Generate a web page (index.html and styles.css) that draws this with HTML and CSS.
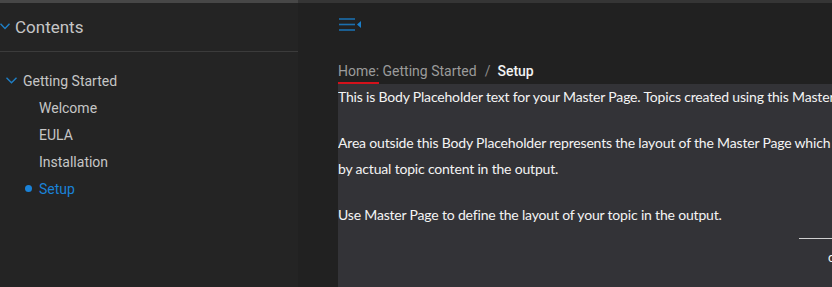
FILE: index.html
```html
<!DOCTYPE html>
<html lang="en">
<head>
    <meta charset="utf-8">
    <title>Setup</title>
    <link rel="stylesheet" href="styles.css">
</head>
<body>
    <aside class="sidebar">
        <div class="toc-head">
            <svg class="chev" width="10" height="7" viewBox="0 0 10 7"><path d="M0.5 0.8 L5 5.5 L9.5 0.8" fill="none" stroke="#1f7fc6" stroke-width="1.4"/></svg>
            <span>Contents</span>
        </div>
        <ul class="toc">
            <li class="book">
                <svg class="chev" width="11" height="7" viewBox="0 0 11 7"><path d="M0.5 0.8 L5.5 5.8 L10.5 0.8" fill="none" stroke="#1f7fc6" stroke-width="1.4"/></svg>
                <span>Getting Started</span>
            </li>
            <li class="topic">Welcome</li>
            <li class="topic">EULA</li>
            <li class="topic">Installation</li>
            <li class="topic current">Setup</li>
        </ul>
    </aside>

    <main class="content">
        <div class="toolbar">
            <svg width="24" height="14" viewBox="0 0 24 14"><g stroke="#1b6fae" stroke-width="1.6"><line x1="1" y1="1" x2="17" y2="1"/><line x1="1" y1="6.5" x2="17" y2="6.5"/><line x1="1" y1="12" x2="17" y2="12"/></g><path d="M23 3 L19 6.5 L23 10 Z" fill="#1b7fca"/></svg>
        </div>
        <div class="crumbs">
            <span class="home">Home:</span><span class="path"> Getting Started</span><span class="sep">/</span><span class="here">Setup</span>
        </div>
        <div class="body">
            <p>This is Body Placeholder text for your Master Page. Topics created using this Master</p>
            <p>Area outside this Body Placeholder represents the layout of the Master Page which<br>by actual topic content in the output.</p>
            <p>Use Master Page to define the layout of your topic in the output.</p>
            <div class="foot">
                <span class="rule"></span>
                <span class="copy">c</span>
            </div>
        </div>
    </main>
</body>
</html>
```

FILE: styles.css
```css
* {
    box-sizing: border-box;
}

body {
    margin: 0;
    height: 287px;
    overflow: hidden;
    display: flex;
    background-color: #212121;
    font-family: Roboto, "Liberation Sans", sans-serif;
}

.sidebar {
    width: 298px;
    flex-shrink: 0;
    background-color: #242424;
    border-top: 3px solid #474747;
    color: #c6c6c6;
}

.toc-head {
    height: 49px;
    display: flex;
    align-items: center;
    gap: 5px;
    font-size: 17px;
    border-bottom: 1px solid #3b3b3b;
    padding-bottom: 1px;
}

.toc {
    list-style: none;
    margin: 0;
    padding: 15px 0 0 0;
    font-size: 14px;
}

.toc li {
    height: 27px;
    display: flex;
    align-items: center;
}

.book {
    padding-left: 6px;
    gap: 6px;
}

.topic {
    padding-left: 39px;
}

.current {
    color: #1a82d8;
    position: relative;
}

.current::before {
    content: "";
    position: absolute;
    left: 25px;
    top: 10px;
    width: 7px;
    height: 7px;
    border-radius: 50%;
    background-color: #1a82d8;
}

.content {
    flex: 1;
    min-width: 0;
    border-top: 3px solid #353535;
    padding-left: 40px;
    display: flex;
    flex-direction: column;
}

.toolbar {
    height: 44px;
    display: flex;
    align-items: center;
}

.crumbs {
    height: 37px;
    padding-top: 16px;
    font-size: 14px;
    color: #9b9b9b;
}

.home {
    border-bottom: 3px solid #d3111b;
    padding-bottom: 3px;
}

.sep {
    margin: 0 7px 0 8px;
    color: #8a8a8a;
}

.here {
    color: #f2f2f2;
    font-weight: 500;
}

.body {
    flex: 1;
    min-width: 0;
    background-color: #333337;
    color: #f4f4f4;
    font-family: Lato, "Open Sans", sans-serif;
    font-size: 14px;
    letter-spacing: -0.18px;
    line-height: 26px;
    white-space: nowrap;
    overflow: hidden;
}

.body p {
    margin: 0 0 20px 0;
}

.foot {
    display: flex;
    flex-direction: column;
    align-items: flex-end;
    margin-top: -10px;
}

.rule {
    width: 33px;
    border-top: 1px solid #d0d0d0;
}

.copy {
    margin-top: 10px;
    width: 4px;
    overflow: hidden;
    font-size: 13px;
    line-height: 16px;
}
```
